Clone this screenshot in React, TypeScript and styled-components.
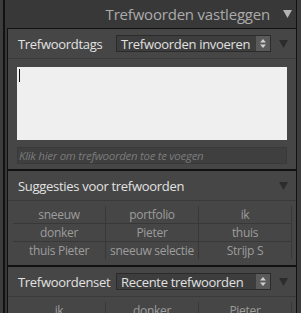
import React from "react";
import styled, { createGlobalStyle } from "styled-components";

const Global = createGlobalStyle`
  html, body { margin: 0; padding: 0; background: #3b3b3b; }
  body { font-family: "Open Sans", "Noto Sans", sans-serif; }
`;

const Frame = styled.div`
  display: flex;
  width: 301px;
  height: 313px;
  overflow: hidden;
  background: #3b3b3b;
`;

const Strip = styled.div<{ $w: number }>`
  width: ${(p) => p.$w}px;
  flex: none;
  background: #3c3c3c;
`;

const Panel = styled.div`
  flex: 1;
  display: flex;
  flex-direction: column;
  background: #383838;
  border-left: 2px solid #121212;
  border-right: 1px solid #121212;
  padding-left: 2px;
  min-width: 0;
`;

const PanelHeader = styled.div`
  height: 28px;
  flex: none;
  display: flex;
  align-items: center;
  justify-content: flex-end;
  padding-right: 4px;
  gap: 13px;
  color: #ababab;
  font-size: 15px;
  letter-spacing: -0.2px;
`;

const Section = styled.div`
  flex: none;
  background: #464646;
  border: 1px solid #121212;
  border-right: none;
  display: flex;
  flex-direction: column;
`;

const SectionHead = styled.div`
  height: 29px;
  display: flex;
  align-items: center;
  padding: 0 8px 0 10px;
  border-bottom: 1px solid #3a3a3a;
  color: #e2e2e2;
  font-size: 13px;
  letter-spacing: -0.3px;
  white-space: nowrap;
`;

const HeadLabel = styled.span`
  min-width: 98px;
  flex: none;
`;

const Select = styled.div`
  width: 155px;
  height: 17px;
  box-sizing: border-box;
  display: flex;
  align-items: center;
  background: #3d3d3d;
  border: 1px solid #2b2b2b;
  color: #e0e0e0;
  font-size: 13px;
  letter-spacing: -0.3px;
  padding-left: 4px;
`;

const SelectText = styled.span`
  flex: 1;
  white-space: nowrap;
`;

const Spinner = styled.div`
  width: 14px;
  height: 15px;
  background: #5a5a5a;
  display: flex;
  align-items: center;
  justify-content: center;
`;

const Grow = styled.div`
  flex: 1;
`;

const Body = styled.div`
  padding: 8px 9px 5px 9px;
  display: flex;
  flex-direction: column;
  gap: 7px;
`;

const TextBox = styled.div`
  height: 73px;
  background: #efefef;
  padding: 2px 2px;
  box-sizing: border-box;
`;

const Caret = styled.div`
  width: 1px;
  height: 13px;
  background: #111;
`;

const Hint = styled.div`
  height: 17px;
  box-sizing: border-box;
  background: #3f3f3f;
  border: 1px solid #393939;
  color: #7a7a7a;
  font-style: italic;
  font-size: 11.5px;
  letter-spacing: -0.3px;
  padding-left: 1px;
  display: flex;
  align-items: center;
  white-space: nowrap;
`;

const GridWrap = styled.div<{ $pb: number }>`
  padding: 5px 4px ${(p) => p.$pb}px 5px;
`;

const Grid = styled.div`
  display: grid;
  grid-template-columns: 92px 92px 92px;
  grid-auto-rows: 17px;
  row-gap: 1px;
  background: #383838;
  column-gap: 1px;
`;

const Cell = styled.div`
  background: #464646;
  color: #9d9d9d;
  font-size: 12px;
  letter-spacing: -0.3px;
  display: flex;
  align-items: center;
  justify-content: center;
  white-space: nowrap;
`;

const Tri = ({ color, w, h }: { color: string; w: number; h: number }) => (
  <svg width={w} height={h} viewBox={`0 0 ${w} ${h}`} style={{ flex: "none" }}>
    <polygon points={`0,0 ${w},0 ${w / 2},${h}`} fill={color} />
  </svg>
);

const SpinIcon = () => (
  <svg width="8" height="11" viewBox="0 0 8 11">
    <polygon points="1,4.5 4,1 7,4.5" fill="#cfcfcf" />
    <polygon points="1,6.5 4,10 7,6.5" fill="#cfcfcf" />
  </svg>
);

const Head = ({ label, value }: { label: string; value?: string }) => (
  <SectionHead>
    <HeadLabel>{label}</HeadLabel>
    {value ? (
      <Select>
        <SelectText>{value}</SelectText>
        <Spinner>
          <SpinIcon />
        </Spinner>
      </Select>
    ) : null}
    <Grow />
    <Tri color="#2c2c2c" w={9} h={8} />
  </SectionHead>
);

const suggestions = [
  "sneeuw",
  "portfolio",
  "ik",
  "donker",
  "Pieter",
  "thuis",
  "thuis Pieter",
  "sneeuw selectie",
  "Strijp S",
];

const recent = ["ik", "donker", "Pieter"];

export default function App() {
  return (
    <>
      <Global />
      <Frame>
        <Strip $w={3} />
        <Panel>
          <PanelHeader>
            <span>Trefwoorden vastleggen</span>
            <Tri color="#b3b3b3" w={9} h={8} />
          </PanelHeader>
          <Section>
            <Head label="Trefwoordtags" value="Trefwoorden invoeren" />
            <Body>
              <TextBox>
                <Caret />
              </TextBox>
              <Hint>Klik hier om trefwoorden toe te voegen</Hint>
            </Body>
          </Section>
          <Section>
            <Head label="Suggesties voor trefwoorden" />
            <GridWrap $pb={6}>
              <Grid>
                {suggestions.map((s) => (
                  <Cell key={s}>{s}</Cell>
                ))}
              </Grid>
            </GridWrap>
          </Section>
          <Section>
            <Head label="Trefwoordenset" value="Recente trefwoorden" />
            <GridWrap $pb={6}>
              <Grid>
                {recent.map((s) => (
                  <Cell key={s}>{s}</Cell>
                ))}
              </Grid>
            </GridWrap>
          </Section>
        </Panel>
        <Strip $w={4} />
      </Frame>
    </>
  );
}
